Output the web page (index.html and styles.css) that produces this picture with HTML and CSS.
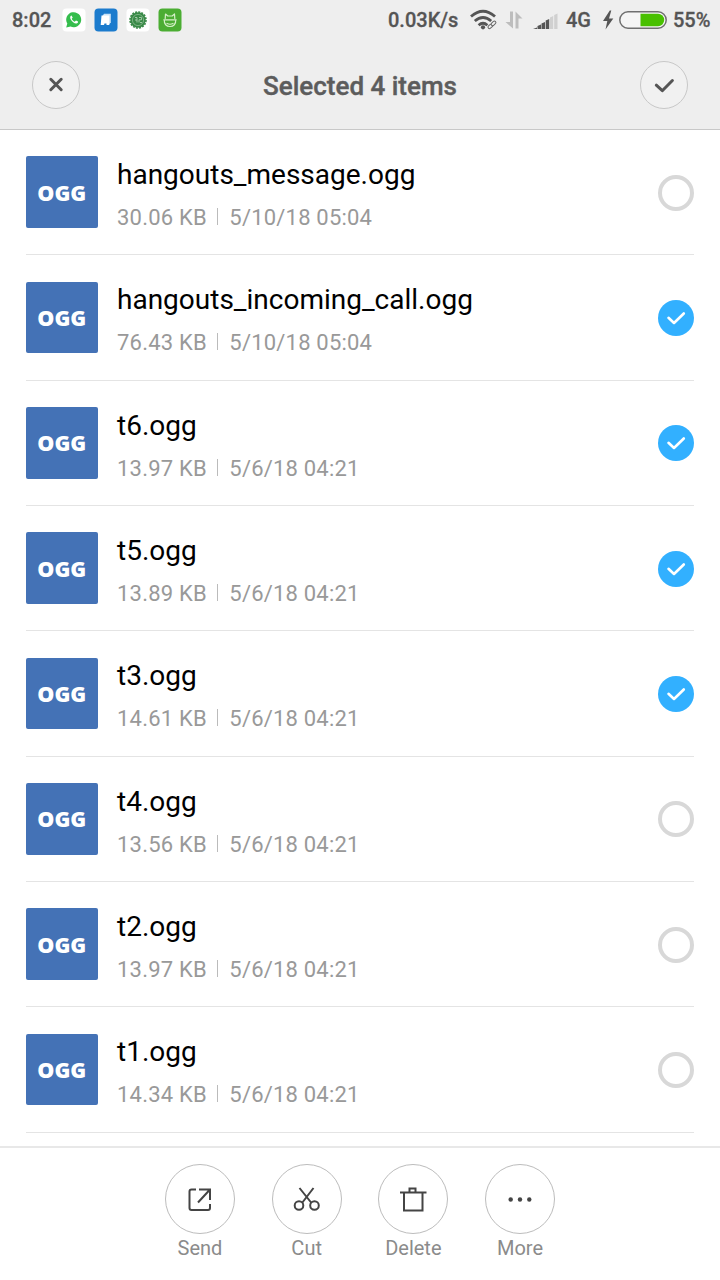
FILE: index.html
```html
<!DOCTYPE html>
<html lang="en">
<head>
<meta charset="utf-8">
<title>Selected 4 items</title>
<link rel="stylesheet" href="styles.css">
</head>
<body>
<div class="screen">
  <header class="top">
    <div class="status">
      <span class="clock">8:02</span>
      <div class="notifications">
        <svg class="app" viewBox="0 0 24 24"><rect x=".5" y=".5" width="23" height="23" rx="4" fill="#fff"/><path d="M4.200 19.600l1.100-4A7.500 7.500 0 1 1 8.600 18.500z" fill="#35bd4d"/><path d="M9.500 7.500c-1.500.5-1.700 2.200-.7 4 1.200 2.200 3.500 4.100 5.500 4 1.300-.1 2-1.200 1.700-2l-2-1.100-1.300 1.300c-1.300-.5-2.400-1.600-3-2.900l1-1.200z" fill="#fff"/></svg>
        <svg class="app" viewBox="0 0 24 24"><rect x=".5" y=".5" width="23" height="23" rx="4" fill="#1b7bcd"/><path d="M8.500 8l1.500-2.200h6.800V14.500l-2 2z" fill="#c9e2f7"/><path d="M7.500 7.500h7.800V17h-2.800v-1.500h-2L10 17H6.700z" fill="#fff"/></svg>
        <svg class="app" viewBox="0 0 24 24"><rect x=".5" y=".5" width="23" height="23" rx="4" fill="#fff"/><circle cx="12" cy="12" r="7.700" fill="#398947"/><circle cx="12" cy="12" r="8" fill="none" stroke="#398947" stroke-width="1.600" stroke-dasharray="2 1.140"/><circle cx="12" cy="12" r="5.600" fill="none" stroke="#94c39a" stroke-width=".7"/><path d="M9 9.500h2v5M9 12h2M13 9.500h2.500v2.300H13v2.700M16 14.500h-2" fill="none" stroke="#b9d8bb" stroke-width=".8"/></svg>
        <svg class="app" viewBox="0 0 24 24"><rect x=".5" y=".5" width="23" height="23" rx="4" fill="#4bad33"/><g fill="none" stroke="#d6f0c9" stroke-width="1.200" stroke-linejoin="round" stroke-linecap="round"><path d="M7.200 10.500L7.500 6l2.300 2h4.400l2.300-2 .3 4.500M5.800 11.800h12.400M6.300 12c-.3 4 2 6.500 5.700 6.500s6-2.500 5.700-6.500M9 15.500q3 1.500 6 0"/></g></svg>
      </div>
      <span class="speed">0.03K/s</span>
      <svg class="wifi" viewBox="0 0 28 22"><g fill="none" stroke="#555" stroke-width="2.800"><path d="M1 7.500Q13-3 25 7.500"/><path d="M4.800 12q8.200-7 16.400 0"/><path d="M8.600 16.200q4.400-3.800 8.800 0"/></g><circle cx="13" cy="18.300" r="2.100" fill="#555"/><g fill="#eee" stroke="#666" stroke-width="1"><rect x="17.700" y="15.800" width="5.400" height="3" rx="1.500" transform="rotate(-42 20.400 17.300)"/><rect x="20.800" y="12.900" width="5.400" height="3" rx="1.500" transform="rotate(-42 23.500 14.400)"/></g></svg>
      <svg class="transfer" viewBox="0 0 18 18"><path d="M5 .5h3v17L.5 11H5zM10.500 17.500h3V7.500H17.500L10.500.5z" fill="#bdbdbd"/></svg>
      <svg class="signal" viewBox="0 0 26 17"><path d="M0 16l4-1.500V16zM4.500 13L8 11.500V16H4.500zM8.500 10.500l3.500-1.500v7H8.500zM12.700 7.500L16.200 6v10h-3.500z" fill="#555"/><path d="M17 4.500L20.200 3v13H17zM21.200 2l3.300-1.500V16h-3.300z" fill="#d0d0d0"/></svg>
      <span class="network">4G</span>
      <svg class="bolt" viewBox="0 0 12 20"><path d="M7.800.5L1 11h4.300L3.500 19.500 11.300 8.500H7L9.300.5z" fill="#555"/></svg>
      <svg class="battery" viewBox="0 0 48 18"><rect x=".8" y=".8" width="46.400" height="16.400" rx="8.200" fill="#f5f5f5" stroke="#707070" stroke-width="1.500"/><path d="M21.500 2.800H39a6.200 6.200 0 0 1 0 12.400H21.500z" fill="#48c000"/></svg>
      <span class="percent">55%</span>
    </div>
    <div class="titlebar">
      <button class="round" aria-label="Cancel"><svg viewBox="0 0 48 48"><path d="M18.800 18.300l10.400 10.400M29.200 18.300L18.800 28.700" stroke-width="3"/></svg></button>
      <h1 class="title">Selected 4 items</h1>
      <button class="round" aria-label="Select all"><svg viewBox="0 0 48 48"><path d="M16.300 24.200l6 5.500L32.400 19.500" stroke-width="3"/></svg></button>
    </div>
  </header>
  <main class="list">
    <div class="row"><div class="thumb">OGG</div><div class="info"><div class="name">hangouts_message.ogg</div><div class="meta"><span>30.06 KB</span><i class="bar"></i><span>5/10/18 05:04</span></div></div><span class="check"></span></div>
    <div class="row"><div class="thumb">OGG</div><div class="info"><div class="name">hangouts_incoming_call.ogg</div><div class="meta"><span>76.43 KB</span><i class="bar"></i><span>5/10/18 05:04</span></div></div><span class="check on"><svg viewBox="0 0 36 36"><path d="M10.500 17.800l5.500 5.200L25.800 13.500"/></svg></span></div>
    <div class="row"><div class="thumb">OGG</div><div class="info"><div class="name">t6.ogg</div><div class="meta"><span>13.97 KB</span><i class="bar"></i><span>5/6/18 04:21</span></div></div><span class="check on"><svg viewBox="0 0 36 36"><path d="M10.500 17.800l5.500 5.200L25.800 13.500"/></svg></span></div>
    <div class="row"><div class="thumb">OGG</div><div class="info"><div class="name">t5.ogg</div><div class="meta"><span>13.89 KB</span><i class="bar"></i><span>5/6/18 04:21</span></div></div><span class="check on"><svg viewBox="0 0 36 36"><path d="M10.500 17.800l5.500 5.200L25.800 13.500"/></svg></span></div>
    <div class="row"><div class="thumb">OGG</div><div class="info"><div class="name">t3.ogg</div><div class="meta"><span>14.61 KB</span><i class="bar"></i><span>5/6/18 04:21</span></div></div><span class="check on"><svg viewBox="0 0 36 36"><path d="M10.500 17.800l5.500 5.200L25.800 13.500"/></svg></span></div>
    <div class="row"><div class="thumb">OGG</div><div class="info"><div class="name">t4.ogg</div><div class="meta"><span>13.56 KB</span><i class="bar"></i><span>5/6/18 04:21</span></div></div><span class="check"></span></div>
    <div class="row"><div class="thumb">OGG</div><div class="info"><div class="name">t2.ogg</div><div class="meta"><span>13.97 KB</span><i class="bar"></i><span>5/6/18 04:21</span></div></div><span class="check"></span></div>
    <div class="row"><div class="thumb">OGG</div><div class="info"><div class="name">t1.ogg</div><div class="meta"><span>14.34 KB</span><i class="bar"></i><span>5/6/18 04:21</span></div></div><span class="check"></span></div>
  </main>
  <footer class="actions">
    <div class="action"><svg viewBox="0 0 70 70"><circle cx="35" cy="35" r="34.500"/><path d="M31 25.500h-4.500q-2 0-2 2v16.500q0 2 2 2h16.500q2 0 2-2V40M34 25.500h11V36M45 25.500L33 38.500"/></svg><span>Send</span></div>
    <div class="action"><svg viewBox="0 0 70 70"><circle cx="35" cy="35" r="34.500"/><path d="M27.500 24l12 15M41.500 24L30 39"/><circle class="ink" cx="27" cy="41.500" r="4.300"/><circle class="ink" cx="42.500" cy="41.500" r="4.300"/></svg><span>Cut</span></div>
    <div class="action"><svg viewBox="0 0 70 70"><circle cx="35" cy="35" r="34.500"/><path d="M22 28.500h26.500M26 28.500v18h18.500v-18M31.500 28v-3.500h6V28"/></svg><span>Delete</span></div>
    <div class="action"><svg viewBox="0 0 70 70"><circle cx="35" cy="35" r="34.500"/><g class="dots"><circle cx="25.700" cy="35.500" r="2.200"/><circle cx="35" cy="35.500" r="2.200"/><circle cx="44.300" cy="35.500" r="2.200"/></g></svg><span>More</span></div>
  </footer>
</div>
</body>
</html>
```
FILE: styles.css
```css
* { box-sizing: border-box; }
body { margin: 0; font-family: Roboto, "Noto Sans", sans-serif; background: #fff; }
.screen { width: 720px; height: 1280px; display: flex; flex-direction: column; overflow: hidden; }
svg { display: block; flex: none; }
.top { height: 130px; background: #eee; border-bottom: 1px solid #c8c8c8; flex: none; }
.status { height: 40px; display: flex; align-items: center; padding-left: 12px; font-size: 20px; font-weight: 500; color: #555; white-space: nowrap; }
.clock { width: 49.5px; flex: none; -webkit-text-stroke: .3px #555; }
.speed, .network, .percent { -webkit-text-stroke: .3px #555; }
.notifications { display: flex; gap: 8px; }
.app { width: 24px; height: 24px; }
.speed { width: 82px; margin-left: 206.5px; flex: none; }
.wifi { width: 28px; height: 22px; }
.transfer { width: 18px; height: 18px; margin-left: 7px; }
.signal { width: 26px; height: 17px; margin: 2px 0 0 10px; }
.network { width: 26px; margin-left: 7px; flex: none; }
.bolt { width: 12px; height: 20px; margin-left: 10px; }
.battery { width: 48px; height: 18px; margin-left: 5px; }
.percent { margin-left: 6px; }
.titlebar { height: 90px; display: flex; align-items: center; justify-content: space-between; padding: 0 32px; }
.round { width: 48px; height: 48px; border: 1px solid #c8c8c8; border-radius: 50%; background: #f1f1f1; padding: 0; }
.round svg { width: 48px; height: 48px; margin: -1px; fill: none; stroke: #555; stroke-linecap: round; stroke-linejoin: round; }
.title { margin: 2px 0 0; font-size: 26px; line-height: 32px; font-weight: 500; color: #5c5c5c; -webkit-text-stroke: .4px #5c5c5c; }
.list { height: 1016px; padding: 0 26px; flex: none; }
.row { height: 125.35px; border-bottom: 1px solid #e4e4e4; display: flex; align-items: center; }
.thumb { width: 71.5px; height: 71.5px; border-radius: 2px; background: #4472b6; color: #fff; display: flex; align-items: center; justify-content: center; font: 800 21.5px/30px "Open Sans", sans-serif; padding-top: 1px; }
.info { margin-left: 19.5px; flex: 1; padding-top: 4.5px; }
.name { font-size: 28px; line-height: 38px; color: #000; }
.meta { display: flex; align-items: center; font-size: 22px; line-height: 30px; color: #999; margin-top: 9px; letter-spacing: .2px; }
.bar { width: 1px; height: 17px; background: #bbb; margin: -3px 11px 0 10.5px; }
.check { width: 36px; height: 36px; margin-top: 1px; border: 4px solid #d8d8d8; border-radius: 50%; }
.check.on { border: 0; background: #32b0ff; }
.check svg { width: 36px; height: 36px; fill: none; stroke: #fff; stroke-width: 2.6; stroke-linecap: round; stroke-linejoin: round; }
.actions { flex: 1; border-top: 2px solid #e8e8e8; display: flex; justify-content: center; gap: 36.7px; padding-top: 16px; }
.action { width: 70px; display: flex; flex-direction: column; align-items: center; font-size: 20px; line-height: 29px; color: #8b8b8b; }
.action svg { width: 70px; height: 70px; fill: none; stroke: #444; stroke-width: 2; }
.action svg > circle { stroke: #bcbcbc; stroke-width: 1; }
.action svg > .ink { stroke: #444; stroke-width: 2; }
.action svg > .dots { fill: #444; stroke: none; }
.action svg > .dots circle { stroke: none; }
```
